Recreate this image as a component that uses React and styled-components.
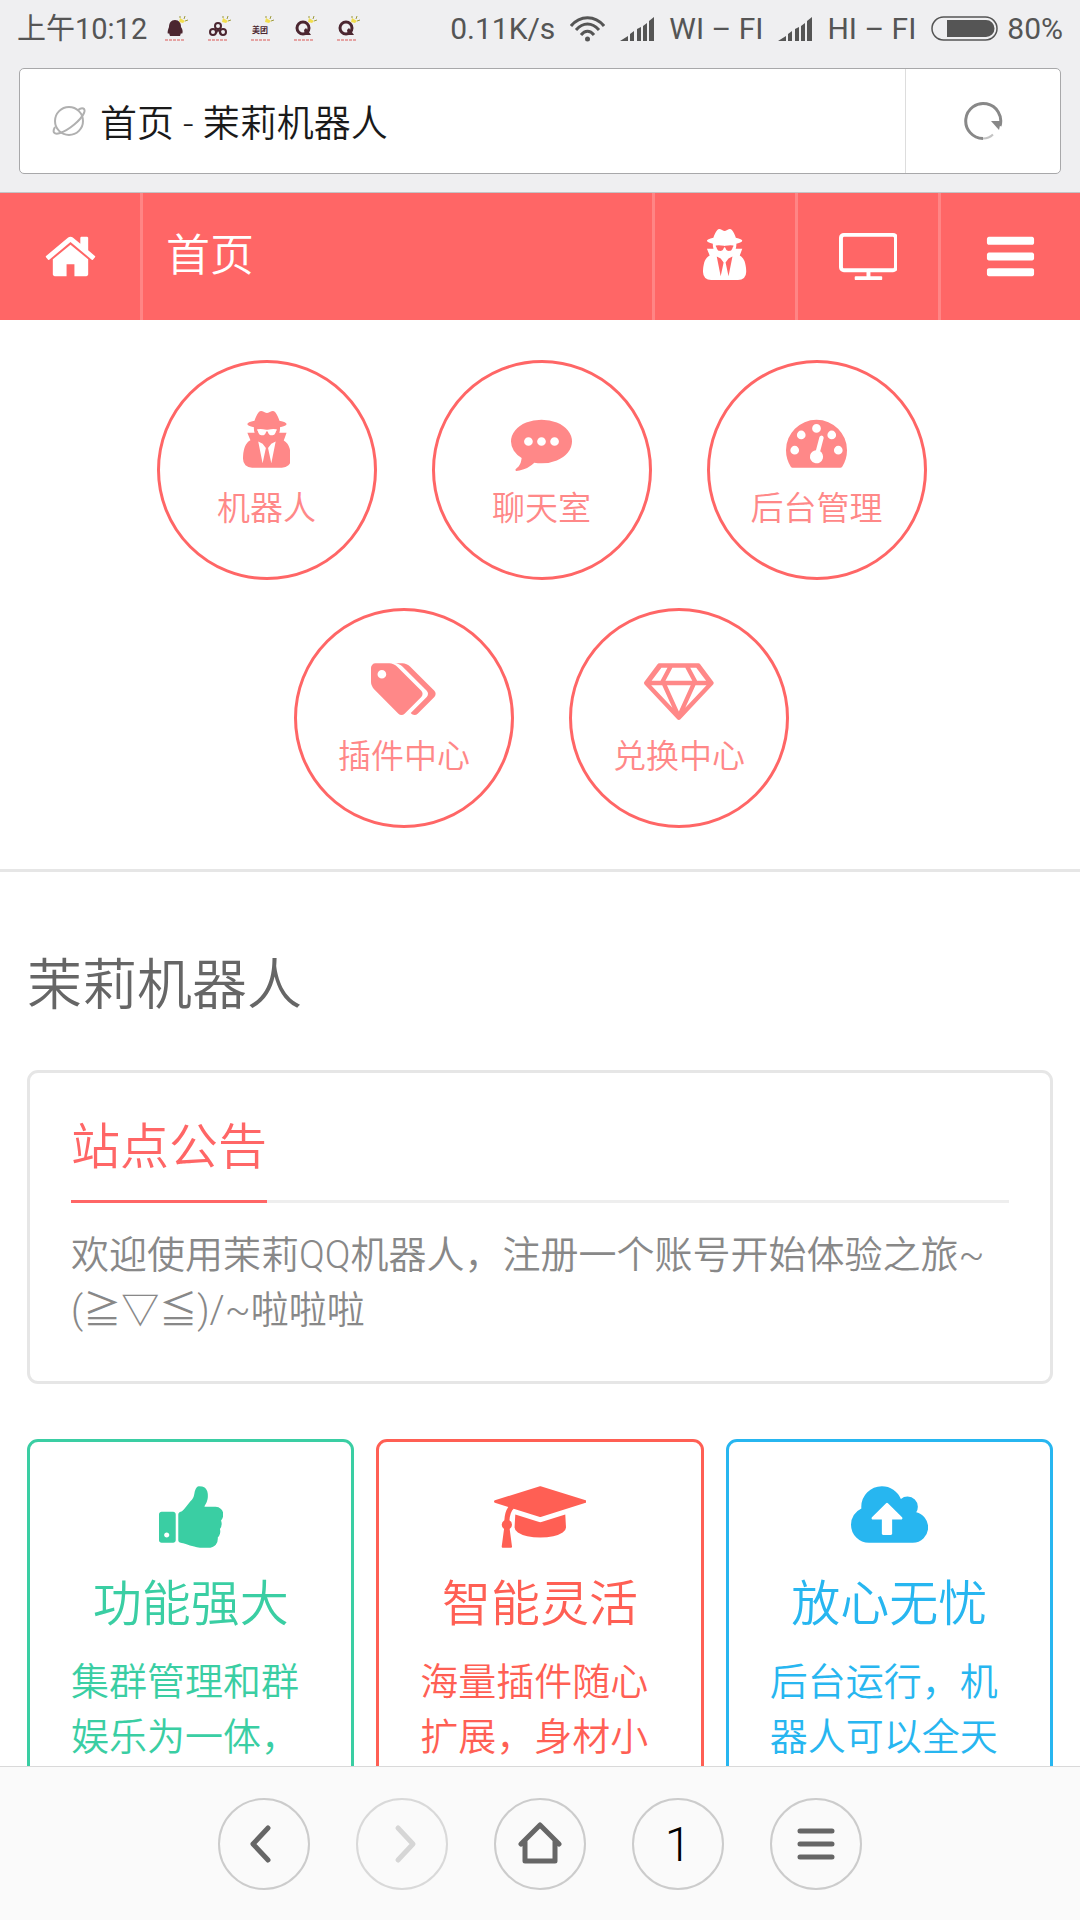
import React from 'react'
import styled, { createGlobalStyle } from 'styled-components'

// every dot in the chat and gauge icons is this same 256 unit circle
const DOT = 'q0-53-37.5-90.5t-90.5-37.5-90.5 37.5-37.5 90.5 37.5 90.5 90.5 37.5 90.5-37.5 37.5-90.5z'

const icons = {
  home: {
    width: 1792,
    path: 'M1472 992v480q0 26-19 45t-45 19h-384v-384h-256v384h-384q-26 0-45-19t-19-45v-480q0-1 .5-3t.5-3l575-474 575 474q1 2 1 6zm223-69l-62 74q-8 9-21 11h-3q-13 0-21-7l-692-577-692 577q-12 8-24 7-13-2-21-11l-62-74q-8-10-7-23.5t11-21.5l719-599q32-26 76-26t76 26l244 204v-195q0-14 9-23t23-9h192q14 0 23 9t9 23v408l219 182q10 8 11 21.5t-7 23.5z',
  },
  spy: {
    width: 1408,
    path: 'M576 1536l96-448-96-128-128-64zm256 0l128-640-128 64-96 128zm160-992q-2-4-4-6-10-8-96-8-70 0-167 19-7 2-21 2t-21-2q-97-19-167-19-86 0-96 8-2 2-4 6 2 18 4 27 2 3 7.5 6.5t7.5 10.5q2 4 7.5 20.5t7 20.5 7.5 17 8.5 17 9 14 12 13.5 14 9.5 17.5 8 20.5 4 24.5 2q36 0 59-12.5t32.5-30 14.5-34.5 11.5-29.5 17.5-12.5h12q11 0 17.5 12.5t11.5 29.5 14.5 34.5 32.5 30 59 12.5q13 0 24.5-2t20.5-4 17.5-8 14-9.5 12-13.5 9-14 8.5-17 7.5-17 7-20.5 7.5-20.5q2-7 7.5-10.5t7.5-6.5q2-9 4-27zm416 861q0 121-73 190t-194 69h-874q-121 0-194-69t-73-190q0-61 4.5-118t19-125.5 37.5-123.5 63.5-103.5 93.5-74.5l-90-220h214q-22-64-22-128 0-12 2-32-194-40-194-96 0-57 210-99 17-62 51.5-134t70.5-114q32-37 76-37 30 0 84 31t84 31 84-31 84-31q44 0 76 37 36 42 70.5 114t51.5 134q210 42 210 99 0 56-194 96 7 81-20 160h214l-82 225q63 33 107.5 96.5t65.5 143.5 29 151.5 8 148.5z',
  },
  tv: {
    width: 1920,
    path: 'M160 128h1600q66 0 113 47t47 113v960q0 66-47 113t-113 47h-736v128h352q14 0 23 9t9 23v64q0 14-9 23t-23 9h-832q-14 0-23-9t-9-23v-64q0-14 9-23t23-9h352v-128h-736q-66 0-113-47t-47-113v-960q0-66 47-113t113-47zM160 256q-13 0-22.500 9.500t-9.500 22.500v960q0 13 9.500 22.500t22.500 9.500h1600q13 0 22.500-9.500t9.500-22.500v-960q0-13-9.500-22.500t-22.500-9.500z',
  },
  bars: {
    width: 1792,
    path: 'M1664 1344v128q0 26-19 45t-45 19h-1408q-26 0-45-19t-19-45v-128q0-26 19-45t45-19h1408q26 0 45 19t19 45zm0-512v128q0 26-19 45t-45 19h-1408q-26 0-45-19t-19-45v-128q0-26 19-45t45-19h1408q26 0 45 19t19 45zm0-512v128q0 26-19 45t-45 19h-1408q-26 0-45-19t-19-45v-128q0-26 19-45t45-19h1408q26 0 45 19t19 45z',
  },
  chat: {
    width: 1792,
    path: `M640 896${DOT}M1024 896${DOT}M1408 896${DOT}M1792 896q0 174-120 321.5t-326 233-450 85.5q-110 0-211-18-173 173-435 229-52 10-86 13-12 1-22-6t-13-18q-4-15 20-37 5-5 23.5-21.5t25.5-23.5 23.5-25.5 24-31.5 20.5-37 20-48 14.5-57.5 12.5-72.5q-146-90-229.5-216.5t-83.5-269.500q0-174 120-321.5t326-233 450-85.5 450 85.5 326 233 120 321.5z`,
  },
  gauge: {
    width: 1792,
    path: `M384 1152${DOT}M576 704${DOT}M1004 1185l101-382q6-26-7.5-48.5t-38.5-29.5-48 6.5-30 39.5l-101 382q-60 5-107 43.5t-63 98.5q-20 77 20 146t117 89 146-20 89-117q16-60-6-117t-72-91zM1664 1152${DOT}M1024 512${DOT}M1472 704${DOT}M1792 1152q0 261-141 483-19 29-54 29h-1402q-35 0-54-29-141-221-141-483 0-182 71-348t191-286 286-191 348-71 348 71 286 191 191 286 71 348z`,
  },
  tags: {
    width: 1920,
    path: `M448 448${DOT}M1515 1024q0 53-37 90l-491 492q-39 37-91 37-53 0-90-37l-715-716q-38-37-64.5-101t-26.500-117v-416q0-52 38-90t90-38h416q53 0 117 26.5t102 64.5l715 714q37 39 37 91zm384 0q0 53-37 90l-491 492q-39 37-91 37-36 0-59-14t-53-45l470-470q37-37 37-90 0-52-37-91l-715-714q-38-38-102-64.5t-117-26.5h224q53 0 117 26.5t102 64.5l715 714q37 39 37 91z`,
  },
  diamond: {
    width: 2048,
    path: 'M212 768l623 665-300-665zM1024 1540l349-772h-698zM486 640l204-384h-178l-288 384zM1213 1433l623-665h-323zM630 640h788l-204-384h-380zM1562 640h262l-288-384h-178zM1651 154l384 512q14 18 13 41.5t-17 40.5l-960 1024q-18 20-47 20t-47-20l-960-1024q-16-17-17-40.5t13-41.5l384-512q18-26 51-26h1152q33 0 51 26z',
  },
  thumb: {
    width: 1600,
    path: 'M256 1344q0-26-19-45t-45-19q-27 0-45.5 19t-18.5 45q0 27 18.5 45.5t45.5 18.5q26 0 45-18.5t19-45.5zm160-512v640q0 26-19 45t-45 19h-288q-26 0-45-19t-19-45v-640q0-26 19-45t45-19h288q26 0 45 19t19 45zm1184 0q0 86-55 149 15 44 15 76 3 76-43 137 17 56 0 117-15 57-54 94 9 112-49 181-64 76-197 78h-129q-66 0-144-15.5t-121.5-29-120.5-39.500q-123-43-158-44-26-1-45-19.5t-19-44.5v-641q0-25 18-43.5t43-20.500q24-2 76-59t101-121q68-87 101-120 18-18 31-48t17.5-48.5 13.5-60.500q7-39 12.5-61t19.5-52 34-50q19-19 45-19 46 0 82.5 10.5t60 26 40 40.5 24 45 12 50 5 45 .5 39q0 38-9.5 76t-19 60-27.5 56q-3 6-10 18t-11 22-8 24h277q78 0 135 57t57 135z',
  },
  cap: {
    width: 2304,
    path: 'M1774 836l18 316q4 69-82 128t-235 93.5-323 34.5-323-34.5-235-93.5-82-128l18-316 574 181q22 7 48 7t48-7zm530-324q0 23-22 31l-1120 352q-4 1-10 1t-10-1l-652-206q-43 34-71 111.5t-34 178.500q63 36 63 109 0 69-58 107l58 433q2 14-8 25-9 11-24 11h-192q-15 0-24-11-10-11-8-25l58-433q-58-38-58-107 0-73 65-111 11-207 98-330l-333-104q-22-8-22-31t22-31l1120-352q4-1 10-1t10 1l1120 352q22 8 22 31z',
  },
  cloud: {
    width: 1920,
    path: 'M1280 928q0-14-9-23l-352-352q-9-9-23-9t-23 9l-351 351q-10 12-10 24 0 14 9 23t23 9h224v352q0 13 9.5 22.5t22.5 9.5h192q13 0 22.5-9.5t9.5-22.500v-352h224q13 0 22.5-9.5t9.5-22.500zm640 224q0 159-112.5 271.5t-271.5 112.500h-1088q-185 0-316.5-131.5t-131.5-316.500q0-130 70-240t188-165q-2-30-2-43 0-212 150-362t362-150q156 0 285.5 87t188.5 231q71-62 166-62 106 0 181 75t75 181q0 76-41 138 130 31 213.5 135.5t83.5 238.500z',
  },
}

const shortcuts = [
  { icon: 'spy', label: '机器人' },
  { icon: 'chat', label: '聊天室' },
  { icon: 'gauge', label: '后台管理' },
  { icon: 'tags', label: '插件中心' },
  { icon: 'diamond', label: '兑换中心' },
]

const features = [
  { icon: 'thumb', color: '#3acea3', title: '功能强大', text: '集群管理和群娱乐为一体，' },
  { icon: 'cap', color: '#ff5f54', title: '智能灵活', text: '海量插件随心扩展，身材小' },
  { icon: 'cloud', color: '#27b6f0', title: '放心无忧', text: '后台运行，机器人可以全天' },
]

const notices = ['penguin', 'rings', 'meituan', 'q', 'q']

function Icon({ name, size }) {
  const { width, path } = icons[name]
  return (
    <svg width={(width / 1792) * size} height={size} viewBox={`0 0 ${width} 1792`} fill="currentColor" aria-hidden="true">
      <path fillRule="evenodd" d={path} />
    </svg>
  )
}

function NoticeIcon({ kind }) {
  return (
    <svg width="24" height="28" viewBox="0 0 24 28" aria-hidden="true">
      {kind === 'penguin' && (
        <path fill="#4b2630" d="M10 5c4 0 6 3 6 7 2 3 2 5 1 7l-1-1-1 3H5l-1-3-1 1c-1-2 0-4 1-7 0-4 2-7 6-7z" />
      )}
      {kind === 'rings' && (
        <g fill="none" stroke="#4b2630" strokeWidth="2">
          <circle cx="10" cy="11" r="3" />
          <circle cx="5" cy="17" r="3" />
          <circle cx="15" cy="17" r="3" />
          <path d="M10 14l3 5M10 14l-2 4" />
        </g>
      )}
      {kind === 'meituan' && (
        <text x="1" y="18" fontSize="8" fontWeight="700" fill="#4b2630">美团</text>
      )}
      {kind === 'q' && (
        <g>
          <circle cx="9" cy="13" r="6" fill="none" stroke="#4b2630" strokeWidth="3" />
          <path fill="#4b2630" d="M10 15l2-2 5 7h-6z" />
        </g>
      )}
      <path fill="#f2de4e" d="M15 3l5 3-2 2-4-1z" />
      <path stroke="#9d9a3c" strokeWidth="1" d="M15 1v2M20 1l-1 3M23 5l-3 1" />
      <path stroke="#e5a3a3" strokeWidth="2" strokeDasharray="3 1" d="M0 25h19" />
    </svg>
  )
}

function Wifi() {
  return (
    <svg width="35" height="26" viewBox="0 0 35 26" fill="none" stroke="currentColor" strokeWidth="3" aria-hidden="true">
      <path d="M1 10C10-1 25-1 34 10M6 14c7-8 16-8 23 0M11 19c4-5 9-5 13 0" />
      <circle cx="17.500" cy="23" r="2.500" fill="currentColor" stroke="none" />
    </svg>
  )
}

function Signal() {
  return (
    <svg width="35" height="24" viewBox="0 0 35 24" fill="currentColor" aria-hidden="true">
      <path d="M0 24l8-5v5zM10 17l4-3v10h-4zM17 12l4-2v14h-4zM23 9l4-3v18h-4zM29 4l5-4v24h-5z" />
    </svg>
  )
}

function Battery() {
  return (
    <svg width="67" height="26" viewBox="0 0 67 26" aria-hidden="true">
      <rect x="1" y="1" width="65" height="23" rx="11.500" fill="none" stroke="currentColor" strokeWidth="1.500" />
      <path d="M16 4h39a8.500 8.500 0 0 1 0 17H16z" fill="currentColor" />
    </svg>
  )
}

function App() {
  return (
    <Page>
      <GlobalStyle />
      <StatusBar>
        <Clock>上午10:12</Clock>
        <Notices>
          {notices.map((kind, i) => <NoticeIcon key={i} kind={kind} />)}
        </Notices>
        <Status>
          <span>0.11K/s</span>
          <Wifi />
          <Carrier><Signal />WI – FI</Carrier>
          <Carrier><Signal />HI – FI</Carrier>
          <Charge><Battery />80%</Charge>
        </Status>
      </StatusBar>

      <AddressBar>
        <AddressBox>
          <svg width="34" height="32" viewBox="0 0 34 32" fill="none" stroke="#b0b0b0" strokeWidth="2" aria-hidden="true">
            <circle cx="17" cy="16" r="14" />
            <path d="M26 5c4-3 8-2 6 3C29 15 17 25 8 28c-6 2-8-1-5-6" />
          </svg>
          <Address type="text" aria-label="地址" defaultValue="首页 - 茉莉机器人" />
          <Reload type="button" aria-label="刷新">
            <svg width="40" height="40" viewBox="0 0 40 40" fill="none" aria-hidden="true">
              <path stroke="#888" strokeWidth="3" d="M37 25A17.500 17.500 0 1 0 20 37.500" />
              <path stroke="#c4c4c4" strokeWidth="2" d="M20 37.500q6 0 10-4" />
              <path fill="#888" d="M28 20h10l-2 9z" />
            </svg>
          </Reload>
        </AddressBox>
      </AddressBar>

      <NavBar>
        <NavLink href="#home" aria-label="首页"><Icon name="home" size={55} /></NavLink>
        <NavTitle>首页</NavTitle>
        <NavLink href="#robot" aria-label="机器人"><Icon name="spy" size={55} /></NavLink>
        <NavLink href="#screen" aria-label="后台"><Icon name="tv" size={55} /></NavLink>
        <NavButton type="button" aria-label="菜单"><Icon name="bars" size={55} /></NavButton>
      </NavBar>

      <Content>
        <Shortcuts>
          {shortcuts.map((item) => (
            <Shortcut key={item.label} href={'#' + item.icon}>
              <Icon name={item.icon} size={61} />
              <span>{item.label}</span>
            </Shortcut>
          ))}
        </Shortcuts>

        <Section>
          <h1>茉莉机器人</h1>
          <Notice>
            <NoticeHead><h2>站点公告</h2></NoticeHead>
            <p>欢迎使用茉莉QQ机器人，注册一个账号开始体验之旅~<br />(≧▽≦)/~啦啦啦</p>
          </Notice>
          <Features>
            {features.map((item) => (
              <Feature key={item.title} $color={item.color}>
                <Icon name={item.icon} size={72} />
                <h2>{item.title}</h2>
                <p>{item.text}</p>
              </Feature>
            ))}
          </Features>
        </Section>
      </Content>

      <BottomBar>
        <RoundButton type="button" aria-label="后退">
          <svg width="44" height="44" viewBox="0 0 44 44" aria-hidden="true"><path d="M26 6L11 22l15 16" /></svg>
        </RoundButton>
        <RoundButton type="button" aria-label="前进" disabled>
          <svg width="44" height="44" viewBox="0 0 44 44" aria-hidden="true"><path d="M18 6l15 16-15 16" /></svg>
        </RoundButton>
        <RoundButton type="button" aria-label="主页">
          <svg width="44" height="44" viewBox="0 0 44 44" aria-hidden="true"><path d="M3 22L22 3l19 19M7 19v20h30V19" /></svg>
        </RoundButton>
        <RoundButton type="button">1</RoundButton>
        <RoundButton type="button" aria-label="更多">
          <svg width="44" height="44" viewBox="0 0 44 44" aria-hidden="true"><path d="M6 9h32M6 22h32M6 35h32" /></svg>
        </RoundButton>
      </BottomBar>
    </Page>
  )
}

const GlobalStyle = createGlobalStyle`
  * {
    box-sizing: border-box;
  }
  body {
    margin: 0;
    font-family: Roboto, "Noto Sans CJK SC", sans-serif;
    font-weight: 350;
    background: #fff;
  }
  h1, h2, p {
    margin: 0;
    font-weight: 350;
  }
  svg {
    flex: none;
    display: block;
  }
  a {
    text-decoration: none;
  }
  button {
    font: inherit;
    background: none;
    border: 0;
    padding: 0;
  }
`

const Page = styled.div`
  display: flex;
  flex-direction: column;
  height: 100vh;
`

const StatusBar = styled.div`
  display: flex;
  align-items: center;
  padding: 9px 17px 19px;
  font-size: 30px;
  line-height: 40px;
  font-weight: 400;
  color: #555;
  background: #efeff1;
`

const Clock = styled.span`
  font-size: 29px;
  white-space: nowrap;
`

const Notices = styled.div`
  display: flex;
  gap: 19px;
  margin-left: 18px;
`

const Status = styled.div`
  display: flex;
  align-items: center;
  gap: 15px;
  margin-left: auto;
  white-space: nowrap;
`

const Carrier = styled.span`
  display: flex;
  align-items: center;
  gap: 14px;
`

const Charge = styled.span`
  display: flex;
  align-items: center;
  gap: 9px;
`

const AddressBar = styled.div`
  padding: 0 19px 18px;
  background: #efeff1;
  border-bottom: 1px solid #c4c4c6;
`

const AddressBox = styled.div`
  display: flex;
  align-items: center;
  height: 106px;
  padding-left: 32px;
  background: #fff;
  border: 1px solid #a8a8aa;
  border-radius: 5px;
`

const Address = styled.input`
  flex: 1;
  min-width: 0;
  padding: 0 14px;
  border: 0;
  outline: 0;
  font-family: inherit;
  font-size: 37px;
  font-weight: 350;
  color: #1a1a1a;
`

const Reload = styled.button`
  display: flex;
  align-items: center;
  justify-content: center;
  align-self: stretch;
  width: 155px;
  border-left: 1px solid #ddd;
`

const NavBar = styled.nav`
  display: flex;
  height: 127px;
  color: #fff;
  background: #f66;

  & > * + * {
    border-left: 3px solid #ff8585;
  }
`

const NavLink = styled.a`
  display: flex;
  align-items: center;
  justify-content: center;
  width: 143px;
  color: inherit;

  &:first-child {
    width: 140px;
  }
`

const NavButton = styled(NavLink).attrs({ as: 'button' })`
  width: 142px;
`

const NavTitle = styled.span`
  flex: 1;
  padding-left: 23px;
  font-size: 44px;
  line-height: 126px;
`

const Content = styled.main`
  flex: 1;
  min-height: 0;
  overflow: hidden;
`

const Shortcuts = styled.div`
  display: flex;
  flex-wrap: wrap;
  justify-content: center;
  gap: 28px 55px;
  padding: 40px 98px 41px 101px;
  border-bottom: 3px solid #e6e6e6;
`

const Shortcut = styled.a`
  display: flex;
  flex-direction: column;
  align-items: center;
  width: 220px;
  height: 220px;
  padding-top: 48px;
  border: 3px solid #f66;
  border-radius: 50%;
  color: #f88;
  font-size: 33px;
  line-height: 48px;

  span {
    margin-top: 13px;
  }
`

const Section = styled.section`
  padding: 75px 27px 28px;

  h1 {
    font-size: 55px;
    line-height: 76px;
    color: #666;
  }
`

const Notice = styled.div`
  margin-top: 47px;
  padding: 43px 41px;
  border: 3px solid #e6e6e6;
  border-radius: 11px;
  color: #888;

  p {
    margin-top: 25px;
    font-size: 38px;
    line-height: 55px;
  }
`

const NoticeHead = styled.div`
  display: flex;
  border-bottom: 3px solid #eee;

  h2 {
    margin-bottom: -3px;
    padding-bottom: 20px;
    border-bottom: 3px solid #f66;
    font-size: 49px;
    line-height: 64px;
    color: #f66;
  }
`

const Features = styled.div`
  display: grid;
  grid-template-columns: repeat(3, 1fr);
  gap: 22px;
  margin-top: 55px;
`

const Feature = styled.div`
  padding: 39px 41px 55px;
  border: 3px solid ${(props) => props.$color};
  border-radius: 11px;
  color: ${(props) => props.$color};

  svg {
    margin: 0 auto;
  }
  h2 {
    margin-top: 20px;
    font-size: 49px;
    line-height: 64px;
    text-align: center;
  }
  p {
    margin-top: 18px;
    font-size: 38px;
    line-height: 55px;
  }
`

const BottomBar = styled.footer`
  display: flex;
  justify-content: center;
  gap: 46px;
  padding: 31px 0 30px;
  background: #fafafa;
  border-top: 1px solid #d9d9d9;
`

const RoundButton = styled.button`
  display: flex;
  align-items: center;
  justify-content: center;
  width: 92px;
  height: 92px;
  border: 2px solid #ccc;
  border-radius: 50%;
  font-size: 48px;
  color: #000;

  svg {
    fill: none;
    stroke: #666;
    stroke-width: 5px;
    stroke-linecap: round;
    stroke-linejoin: round;
  }
  &:disabled {
    border-color: #d9d9d9;
  }
  &:disabled svg {
    stroke: #d6d6d6;
  }
`

export default App
